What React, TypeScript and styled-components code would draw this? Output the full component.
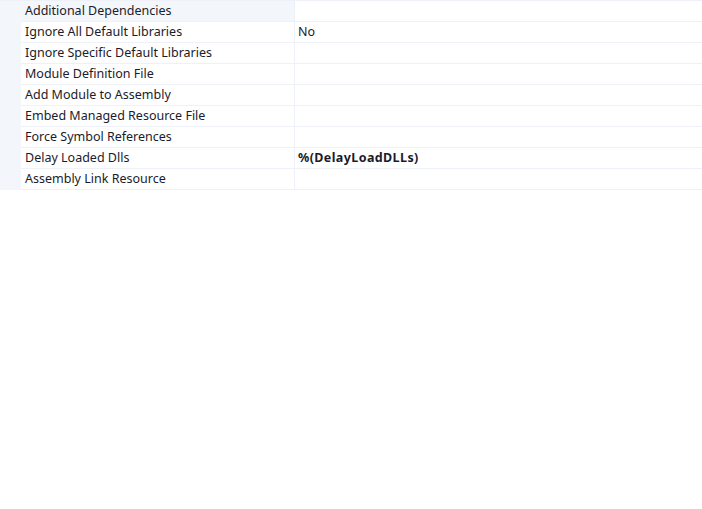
import React from "react";
import styled, { createGlobalStyle } from "styled-components";

const Global = createGlobalStyle`
  html, body { margin: 0; padding: 0; background: #ffffff; }
  body { font-family: "Noto Sans", "Open Sans", sans-serif; }
`;

const Grid = styled.div`
  display: grid;
  grid-template-columns: 21px 274px 1fr;
  border-top: 1px solid #eef1f7;
  width: 100%;
`;

const Gutter = styled.div`
  background: #f3f6fb;
  height: 21px;
`;

const Label = styled.div<{ $selected?: boolean }>`
  height: 20px;
  border-bottom: 1px solid #eef1f7;
  border-right: 1px solid #eef1f7;
  background: ${(p) => (p.$selected ? "#f3f6fb" : "#ffffff")};
  padding-left: 4px;
  font-size: 12.5px;
  line-height: 20px;
  color: #1b1b2b;
  white-space: nowrap;
  overflow: hidden;
`;

const Value = styled.div<{ $bold?: boolean }>`
  height: 20px;
  border-bottom: 1px solid #eef1f7;
  padding-left: 3px;
  font-size: 12.5px;
  line-height: 20px;
  color: #1b1b2b;
  font-weight: ${(p) => (p.$bold ? 700 : 400)};
  letter-spacing: ${(p) => (p.$bold ? "0.4px" : "0")};
  white-space: nowrap;
`;

const rows: { label: string; value?: string; bold?: boolean }[] = [
  { label: "Additional Dependencies" },
  { label: "Ignore All Default Libraries", value: "No" },
  { label: "Ignore Specific Default Libraries" },
  { label: "Module Definition File" },
  { label: "Add Module to Assembly" },
  { label: "Embed Managed Resource File" },
  { label: "Force Symbol References" },
  { label: "Delay Loaded Dlls", value: "%(DelayLoadDLLs)", bold: true },
  { label: "Assembly Link Resource" },
];

export default function App() {
  return (
    <>
      <Global />
      <Grid>
        {rows.map((r, i) => (
          <React.Fragment key={r.label}>
            <Gutter />
            <Label $selected={i === 0}>{r.label}</Label>
            <Value $bold={r.bold}>{r.value ?? ""}</Value>
          </React.Fragment>
        ))}
      </Grid>
    </>
  );
}
